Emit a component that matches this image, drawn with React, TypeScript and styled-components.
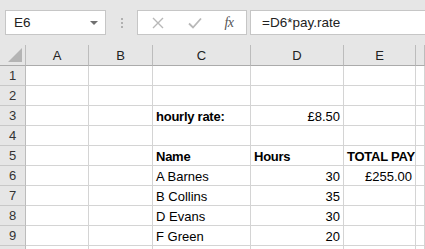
import React from 'react';
import styled, { createGlobalStyle } from 'styled-components';

const GlobalStyle = createGlobalStyle`
  html, body {
    margin: 0;
    padding: 0;
    background: #ffffff;
    overflow: hidden;
  }
  body {
    font-family: "Liberation Sans", Arial, sans-serif;
  }
`;

const COLS = [26, 63, 64, 98, 93, 72, 9];
const LETTERS = ['A', 'B', 'C', 'D', 'E', ''];

const Page = styled.div`
  width: 425px;
  height: 249px;
  overflow: hidden;
  background: #ffffff;
`;

const Toolbar = styled.div`
  height: 45px;
  box-sizing: border-box;
  padding-top: 10px;
  background: #e6e6e6;
  display: flex;
  align-items: flex-start;
`;

const NameBox = styled.div`
  margin-left: 5px;
  width: 101px;
  height: 25px;
  box-sizing: border-box;
  background: #ffffff;
  border: 1px solid #c6c6c6;
  display: flex;
  align-items: center;
  padding: 0 7px 0 8px;
  font-size: 13.5px;
  color: #222;
`;

const NameText = styled.span`
  flex: 1;
`;

const Caret = styled.span`
  width: 0;
  height: 0;
  border-left: 4px solid transparent;
  border-right: 4px solid transparent;
  border-top: 4px solid #707070;
`;

const Grip = styled.div`
  width: 31px;
  height: 25px;
  display: flex;
  flex-direction: column;
  align-items: center;
  justify-content: center;
  gap: 2px;
  & > i {
    width: 2px;
    height: 2px;
    background: #b0b0b0;
  }
`;

const FxBox = styled.div`
  width: 110px;
  height: 25px;
  box-sizing: border-box;
  background: #ffffff;
  border: 1px solid #c6c6c6;
  display: flex;
  align-items: center;
`;

const FxButton = styled.span<{ $w: number }>`
  width: ${p => p.$w}px;
  display: flex;
  justify-content: center;
  align-items: center;
`;

const FxLabel = styled.span`
  font-family: "Liberation Serif", "Times New Roman", serif;
  font-style: italic;
  font-size: 14px;
  color: #555;
  letter-spacing: -0.5px;
`;

const FormulaInput = styled.div`
  margin-left: 3px;
  flex: 1;
  height: 25px;
  box-sizing: border-box;
  background: #ffffff;
  border: 1px solid #c6c6c6;
  border-right: none;
  display: flex;
  align-items: center;
  padding-left: 11px;
  font-size: 13.5px;
  color: #222;
`;

const Grid = styled.div`
  display: grid;
  grid-template-columns: ${COLS.map(c => `${c}px`).join(' ')};
  grid-auto-rows: 20px;
  grid-template-rows: 21px;
`;

const Corner = styled.div`
  background: #e6e6e6;
  border-right: 1px solid #bcbcbc;
  border-bottom: 1px solid #ababab;
  box-sizing: border-box;
  display: flex;
  align-items: flex-end;
  justify-content: flex-end;
  padding: 0 3px 3px 0;
`;

const ColHead = styled.div`
  background: #e6e6e6;
  border-right: 1px solid #bcbcbc;
  border-bottom: 1px solid #ababab;
  box-sizing: border-box;
  display: flex;
  align-items: center;
  justify-content: center;
  font-size: 13px;
  color: #222;
`;

const RowHead = styled.div`
  background: #e6e6e6;
  border-right: 1px solid #bcbcbc;
  border-bottom: 1px solid #c8c8c8;
  box-sizing: border-box;
  display: flex;
  align-items: center;
  justify-content: center;
  font-size: 13px;
  color: #333;
`;

const Cell = styled.div<{ $align?: 'left' | 'right'; $bold?: boolean }>`
  border-right: 1px solid #d4d4d4;
  border-bottom: 1px solid #d4d4d4;
  box-sizing: border-box;
  display: flex;
  align-items: flex-end;
  justify-content: ${p => (p.$align === 'right' ? 'flex-end' : 'flex-start')};
  padding: 0 3px 1px 3px;
  font-size: 13px;
  font-weight: ${p => (p.$bold ? 700 : 400)};
  letter-spacing: ${p => (p.$bold ? '-0.25px' : '0')};
  color: #000;
  white-space: nowrap;
`;

type CellData = { text: string; align?: 'left' | 'right'; bold?: boolean };

const DATA: Record<number, Record<number, CellData>> = {
  3: { 2: { text: 'hourly rate:', bold: true }, 3: { text: '£8.50', align: 'right' } },
  5: {
    2: { text: 'Name', bold: true },
    3: { text: 'Hours', bold: true },
    4: { text: 'TOTAL PAY', bold: true },
  },
  6: { 2: { text: 'A Barnes' }, 3: { text: '30', align: 'right' }, 4: { text: '£255.00', align: 'right' } },
  7: { 2: { text: 'B Collins' }, 3: { text: '35', align: 'right' } },
  8: { 2: { text: 'D Evans' }, 3: { text: '30', align: 'right' } },
  9: { 2: { text: 'F Green' }, 3: { text: '20', align: 'right' } },
};

// row 10 only peeks in at the bottom edge, its number sits below the fold
const ROWS = [1, 2, 3, 4, 5, 6, 7, 8, 9, 10];

export default function App() {
  return (
    <Page>
      <GlobalStyle />
      <Toolbar>
        <NameBox>
          <NameText>E6</NameText>
          <Caret />
        </NameBox>
        <Grip>
          <i />
          <i />
          <i />
        </Grip>
        <FxBox>
          <FxButton $w={40}>
            <svg width="12" height="12" viewBox="0 0 12 12">
              <path d="M1 1 L11 11 M11 1 L1 11" stroke="#b8b8b8" strokeWidth="1.4" fill="none" />
            </svg>
          </FxButton>
          <FxButton $w={34}>
            <svg width="14" height="12" viewBox="0 0 14 12">
              <path d="M1 6.5 L5 10.5 L13 1.5" stroke="#b8b8b8" strokeWidth="1.8" fill="none" />
            </svg>
          </FxButton>
          <FxButton $w={34}>
            <FxLabel>fx</FxLabel>
          </FxButton>
        </FxBox>
        <FormulaInput>=D6*pay.rate</FormulaInput>
      </Toolbar>
      <Grid>
        <Corner>
          <svg width="14" height="14" viewBox="0 0 14 14">
            <path d="M14 0 L14 14 L0 14 Z" fill="#b4b4b4" />
          </svg>
        </Corner>
        {LETTERS.map((l, i) => (
          <ColHead key={i}>{l}</ColHead>
        ))}
        {ROWS.map(r => (
          <React.Fragment key={r}>
            <RowHead>{r < 10 ? r : ''}</RowHead>
            {LETTERS.map((_, c) => {
              const d = DATA[r]?.[c];
              return (
                <Cell key={c} $align={d?.align} $bold={d?.bold}>
                  {d?.text}
                </Cell>
              );
            })}
          </React.Fragment>
        ))}
      </Grid>
    </Page>
  );
}
